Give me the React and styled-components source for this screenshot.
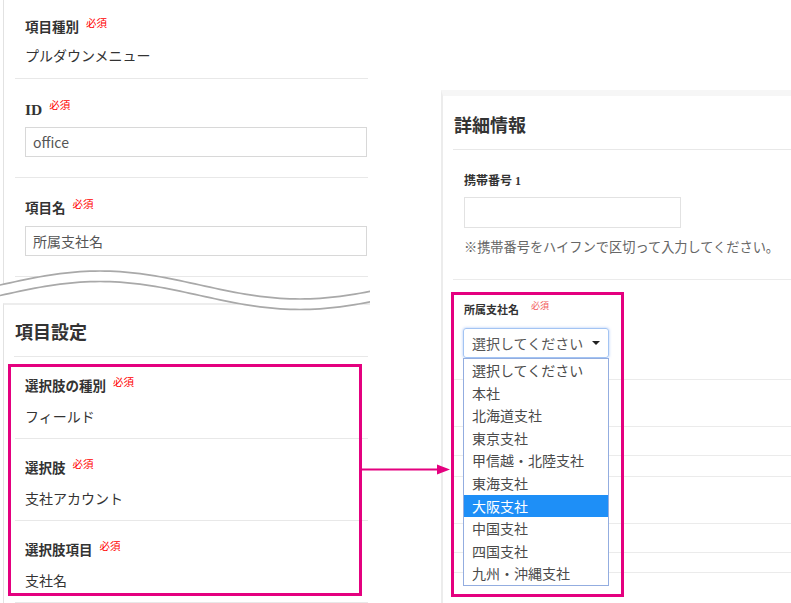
import React from "react";
import styled, { createGlobalStyle } from "styled-components";

const GlobalStyle = createGlobalStyle`
  html, body {
    margin: 0;
    padding: 0;
    background: #fff;
  }
  body {
    font-family: "Noto Sans CJK JP", "Noto Sans", sans-serif;
    color: #333;
    overflow: hidden;
  }
  * {
    box-sizing: border-box;
  }
`;

const PINK = "#e4007f";

const Page = styled.div`
  position: relative;
  display: flex;
  align-items: flex-start;
  width: 791px;
  height: 603px;
  overflow: hidden;
`;

/* ---------- left side ---------- */

const LeftColumn = styled.div`
  position: relative;
  width: 370px;
  flex-shrink: 0;
`;

const PanelTop = styled.div`
  margin-left: 3px;
  height: 290px;
  padding-right: 2px;
  border-left: 1px solid #e2e2e2;
`;

const PanelBottom = styled.div`
  margin: 13px 0 0 3px;
  height: 300px;
  padding-right: 2px;
  border-left: 1px solid #e2e2e2;
  border-top: 2px solid #ededed;
`;

const PanelTitle = styled.h2`
  margin: 0 0 0 10px;
  padding: ${({ $pt }) => $pt}px 0 13px 1px;
  font-size: 18px;
  line-height: 24px;
  font-weight: 700;
  color: #333;
  border-bottom: 1px solid #e8e8e8;
`;

const Field = styled.div`
  display: flex;
  flex-direction: column;
  gap: ${({ $gap }) => $gap}px;
  margin-left: 11px;
  padding: ${({ $pt }) => $pt}px 0 ${({ $pb }) => $pb}px 10px;
  border-bottom: 1px solid #e8e8e8;
`;

const Label = styled.div`
  display: flex;
  align-items: flex-start;
  height: 18px;
  line-height: 18px;
  font-family: "Liberation Serif", "Noto Sans CJK JP", serif;
  font-size: 13.5px;
  font-weight: 700;
  color: #333;
`;

const Latin = styled.span`
  font-size: 15.5px;
`;

const Required = styled.span`
  margin: -2px 0 0 7px;
  font-family: "Noto Sans CJK JP", sans-serif;
  font-size: 10.5px;
  line-height: 12px;
  font-weight: 400;
  color: #ff0000;
`;

const Value = styled.div`
  font-size: 14px;
  line-height: 20px;
  color: #333;
`;

const TextInput = styled.div`
  display: flex;
  align-items: center;
  width: 342px;
  height: 30px;
  padding-left: 7px;
  border: 1px solid #d8d8d8;
  font-size: 14px;
  color: #555;
`;

const Wave = styled.svg`
  position: absolute;
  left: 0;
  top: 255px;
  z-index: 2;
`;

/* ---------- right side ---------- */

const RightColumn = styled.div`
  flex: 1;
  margin: 90px 0 0 71px;
`;

const DetailPanel = styled.div`
  height: 520px;
  border-top: 6px solid #f6f6f6;
  border-left: 2px solid #ececec;
`;

const DetailField = styled.div`
  display: flex;
  flex-direction: column;
  align-items: flex-start;
  margin-left: 10px;
  padding: ${({ $pt }) => $pt}px 0 ${({ $pb }) => $pb}px 11px;
  border-bottom: 1px solid #ebebeb;
`;

const SmallLabel = styled.div`
  display: flex;
  align-items: flex-start;
  height: 16px;
  line-height: 16px;
  font-family: "Liberation Serif", "Noto Sans CJK JP", serif;
  font-size: ${({ $size }) => $size}px;
  font-weight: 700;
  color: #333;
`;

const SmallRequired = styled.span`
  margin: -2px 0 0 12px;
  font-family: "Noto Sans CJK JP", sans-serif;
  font-size: 9px;
  line-height: 12px;
  font-weight: 400;
  color: #f25a5a;
`;

const PhoneInput = styled.div`
  width: 217px;
  height: 31px;
  margin-top: 8px;
  border: 1px solid #e2e2e2;
`;

const HelpText = styled.div`
  margin-top: 10px;
  font-size: 13.2px;
  line-height: 18px;
  color: #666;
  white-space: nowrap;
`;

const SelectWrap = styled.div`
  position: relative;
  width: 146px;
  margin: 10px 0 0 -1px;
`;

const SelectBox = styled.div`
  display: flex;
  align-items: center;
  justify-content: space-between;
  height: 30px;
  padding: 0 8px;
  border: 1px solid #a3c4f3;
  border-radius: 3px;
  box-shadow: 0 0 3px rgba(100, 150, 240, 0.55);
  font-size: 14px;
  color: #555;
`;

const Caret = styled.span`
  width: 0;
  height: 0;
  border-left: 4px solid transparent;
  border-right: 4px solid transparent;
  border-top: 4px solid #222;
`;

const OptionList = styled.ul`
  position: absolute;
  top: 30px;
  left: 0;
  z-index: 2;
  width: 146px;
  margin: 0;
  padding: 0;
  list-style: none;
  background: #fff;
  border: 1px solid #93ade0;
`;

const Option = styled.li`
  height: 22.6px;
  line-height: 22.6px;
  padding-left: 8px;
  font-size: 14px;
  white-space: nowrap;
  color: ${({ $active }) => ($active ? "#fff" : "#4a4a4a")};
  background: ${({ $active }) => ($active ? "#1e8ff7" : "transparent")};
`;

const FillerRow = styled.div`
  height: ${({ $h }) => $h}px;
  margin-left: 10px;
  border-bottom: 1px solid #ebebeb;
`;

/* ---------- annotations ---------- */

const Highlight = styled.div`
  position: absolute;
  left: ${({ $x }) => $x}px;
  top: ${({ $y }) => $y}px;
  width: ${({ $w }) => $w}px;
  height: ${({ $h }) => $h}px;
  z-index: 3;
  border: 3px solid ${PINK};
  pointer-events: none;
`;

const Arrow = styled.svg`
  position: absolute;
  left: 360px;
  top: 460px;
  z-index: 3;
`;

const waveY = (x, offset) =>
  30 - 14 * Math.cos((2 * Math.PI * (x - 100)) / 400) + offset;

const buildLine = (offset) => {
  const pts = [];
  for (let x = -5; x <= 375; x += 5) pts.push(`${x},${waveY(x, offset).toFixed(2)}`);
  return pts;
};

const upper = buildLine(0);
const lower = buildLine(10.5);
const fill = [...buildLine(-0.5), ...buildLine(11).reverse()].join(" ");

const options = [
  "選択してください",
  "本社",
  "北海道支社",
  "東京支社",
  "甲信越・北陸支社",
  "東海支社",
  "大阪支社",
  "中国支社",
  "四国支社",
  "九州・沖縄支社",
];

const settings = [
  { label: "選択肢の種別", value: "フィールド" },
  { label: "選択肢", value: "支社アカウント" },
  { label: "選択肢項目", value: "支社名" },
];

export default function App() {
  return (
    <Page>
      <GlobalStyle />
      <LeftColumn>
        <PanelTop>
          <Field $pt={19} $pb={13} $gap={8}>
            <Label>
              項目種別<Required>必須</Required>
            </Label>
            <Value>プルダウンメニュー</Value>
          </Field>
          <Field $pt={22} $pb={20} $gap={8}>
            <Label>
              <Latin>ID</Latin>
              <Required>必須</Required>
            </Label>
            <TextInput>office</TextInput>
          </Field>
          <Field $pt={22} $pb={20} $gap={8}>
            <Label>
              項目名<Required>必須</Required>
            </Label>
            <TextInput>所属支社名</TextInput>
          </Field>
        </PanelTop>

        <Wave width="370" height="70" viewBox="0 0 370 70">
          <polygon points={fill} fill="#fff" />
          <polyline points={upper.join(" ")} fill="none" stroke="#a9a9a9" strokeWidth="1.7" />
          <polyline points={lower.join(" ")} fill="none" stroke="#a9a9a9" strokeWidth="1.7" />
        </Wave>

        <PanelBottom>
          <PanelTitle $pt={14}>項目設定</PanelTitle>
          {settings.map((s) => (
            <Field key={s.label} $pt={21} $pb={12} $gap={10}>
              <Label>
                {s.label}
                <Required>必須</Required>
              </Label>
              <Value>{s.value}</Value>
            </Field>
          ))}
        </PanelBottom>
      </LeftColumn>

      <RightColumn>
        <DetailPanel>
          <PanelTitle $pt={16}>詳細情報</PanelTitle>
          <DetailField $pt={23} $pb={23}>
            <SmallLabel $size={12}>携帯番号 1</SmallLabel>
            <PhoneInput />
            <HelpText>※携帯番号をハイフンで区切って入力してください。</HelpText>
          </DetailField>
          <DetailField $pt={22} $pb={21}>
            <SmallLabel $size={11}>
              所属支社名<SmallRequired>必須</SmallRequired>
            </SmallLabel>
            <SelectWrap>
              <SelectBox>
                選択してください
                <Caret />
              </SelectBox>
              <OptionList>
                {options.map((o) => (
                  <Option key={o} $active={o === "大阪支社"}>
                    {o}
                  </Option>
                ))}
              </OptionList>
            </SelectWrap>
          </DetailField>
          {[47, 29, 21, 47, 29, 20, 47].map((h, i) => (
            <FillerRow key={i} $h={h} />
          ))}
        </DetailPanel>
      </RightColumn>

      <Highlight $x={8} $y={364} $w={354} $h={232} />
      <Highlight $x={451} $y={292} $w={173} $h={305} />
      <Arrow width="95" height="20" viewBox="0 0 95 20">
        <line x1="2" y1="9.5" x2="82" y2="9.5" stroke={PINK} strokeWidth="2.2" />
        <polygon points="77,4.5 90,9.5 77,14.5" fill={PINK} />
      </Arrow>
    </Page>
  );
}
